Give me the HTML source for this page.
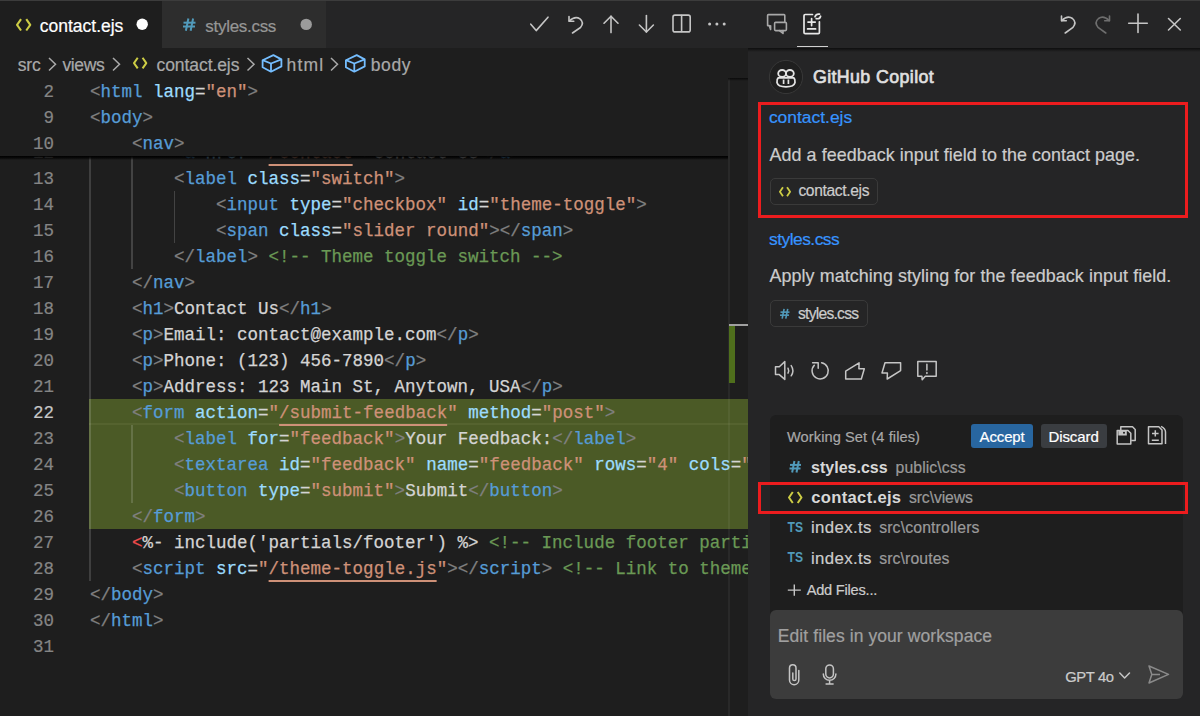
<!DOCTYPE html>
<html><head><meta charset="utf-8">
<style>
*{box-sizing:border-box}
html,body{margin:0;padding:0}
body{width:1200px;height:716px;overflow:hidden;position:relative;background:#1e1e1e;font-family:"Liberation Sans",sans-serif}
.abs{position:absolute}
.tx{-webkit-text-stroke:0.2px currentColor;position:absolute;white-space:pre;line-height:1;font-family:"Liberation Sans",sans-serif}
.ln{-webkit-text-stroke:0.2px currentColor;position:absolute;left:0;width:54px;text-align:right;height:26px;line-height:26px;font-family:"Liberation Mono",monospace;font-size:17.5px;letter-spacing:0.0px;padding-top:1.0px}
.cl{-webkit-text-stroke:0.25px currentColor;position:absolute;left:90px;height:26px;line-height:26px;font-family:"Liberation Mono",monospace;font-size:17.5px;letter-spacing:0.0px;white-space:pre;color:#d4d4d4;padding-top:1.0px}
svg{position:absolute;overflow:visible}
</style></head><body>
<!-- top border -->
<div class="abs" style="left:0;top:0;width:1200px;height:1px;background:#3c3c3c"></div>
<!-- tab bar -->
<div class="abs" style="left:0;top:1px;width:748px;height:47px;background:#252526"></div>
<div class="abs" style="left:0;top:1px;width:162px;height:47px;background:#1e1e1e"></div>
<div class="abs" style="left:162px;top:1px;width:164px;height:47px;background:#2d2d2d"></div>
<!-- panel header + body -->
<div class="abs" style="left:748px;top:1px;width:452px;height:715px;background:#252526"></div>

<!-- editor content area -->
<div class="abs" id="editor" style="left:0;top:78px;width:748px;height:638px;overflow:hidden">
  <div class="abs" style="left:0;top:-78px;width:748px;height:716px">
    <!-- diff highlight -->
    <div class="abs" style="left:89px;top:399px;width:659px;height:130px;background:#4b5a26"></div>
    <div class="abs" style="left:89px;top:423px;width:659px;height:2px;background:#55632f"></div>
    <!-- indent guides -->
    <div class="abs" style="left:89px;top:139px;width:2px;height:442px;background:rgba(255,255,255,0.15)"></div>
    <div class="abs" style="left:131px;top:139px;width:2px;height:130px;background:rgba(255,255,255,0.17)"></div>
    <div class="abs" style="left:174px;top:191px;width:1px;height:52px;background:rgba(255,255,255,0.17)"></div>
    <div class="abs" style="left:131px;top:425px;width:2px;height:78px;background:rgba(255,255,255,0.15)"></div>
    <div class="ln" style="top:139px;color:#858585">12</div><div class="cl" style="top:139px">        <span style="color:#808080">&lt;</span><span style="color:#569cd6">a</span> <span style="color:#9cdcfe">href</span><span style="color:#d4d4d4">=</span><span style="color:#ce9178">"</span><span style="color:#ce9178;text-decoration:underline;text-underline-offset:6px;text-decoration-thickness:1.5px">/contact</span><span style="color:#ce9178">"</span><span style="color:#808080">&gt;</span><span style="color:#d4d4d4">Contact Us</span><span style="color:#808080">&lt;/</span><span style="color:#569cd6">a</span><span style="color:#808080">&gt;</span></div>
<div class="ln" style="top:165px;color:#858585">13</div><div class="cl" style="top:165px">        <span style="color:#808080">&lt;</span><span style="color:#569cd6">label</span> <span style="color:#9cdcfe">class</span><span style="color:#d4d4d4">=</span><span style="color:#ce9178">"switch"</span><span style="color:#808080">&gt;</span></div>
<div class="ln" style="top:191px;color:#858585">14</div><div class="cl" style="top:191px">            <span style="color:#808080">&lt;</span><span style="color:#569cd6">input</span> <span style="color:#9cdcfe">type</span><span style="color:#d4d4d4">=</span><span style="color:#ce9178">"checkbox"</span> <span style="color:#9cdcfe">id</span><span style="color:#d4d4d4">=</span><span style="color:#ce9178">"theme-toggle"</span><span style="color:#808080">&gt;</span></div>
<div class="ln" style="top:217px;color:#858585">15</div><div class="cl" style="top:217px">            <span style="color:#808080">&lt;</span><span style="color:#569cd6">span</span> <span style="color:#9cdcfe">class</span><span style="color:#d4d4d4">=</span><span style="color:#ce9178">"slider round"</span><span style="color:#808080">&gt;</span><span style="color:#808080">&lt;/</span><span style="color:#569cd6">span</span><span style="color:#808080">&gt;</span></div>
<div class="ln" style="top:243px;color:#858585">16</div><div class="cl" style="top:243px">        <span style="color:#808080">&lt;/</span><span style="color:#569cd6">label</span><span style="color:#808080">&gt;</span> <span style="color:#6a9955">&lt;!-- Theme toggle switch --&gt;</span></div>
<div class="ln" style="top:269px;color:#858585">17</div><div class="cl" style="top:269px">    <span style="color:#808080">&lt;/</span><span style="color:#569cd6">nav</span><span style="color:#808080">&gt;</span></div>
<div class="ln" style="top:295px;color:#858585">18</div><div class="cl" style="top:295px">    <span style="color:#808080">&lt;</span><span style="color:#569cd6">h1</span><span style="color:#808080">&gt;</span><span style="color:#d4d4d4">Contact Us</span><span style="color:#808080">&lt;/</span><span style="color:#569cd6">h1</span><span style="color:#808080">&gt;</span></div>
<div class="ln" style="top:321px;color:#858585">19</div><div class="cl" style="top:321px">    <span style="color:#808080">&lt;</span><span style="color:#569cd6">p</span><span style="color:#808080">&gt;</span><span style="color:#d4d4d4">Email: contact@example.com</span><span style="color:#808080">&lt;/</span><span style="color:#569cd6">p</span><span style="color:#808080">&gt;</span></div>
<div class="ln" style="top:347px;color:#858585">20</div><div class="cl" style="top:347px">    <span style="color:#808080">&lt;</span><span style="color:#569cd6">p</span><span style="color:#808080">&gt;</span><span style="color:#d4d4d4">Phone: (123) 456-7890</span><span style="color:#808080">&lt;/</span><span style="color:#569cd6">p</span><span style="color:#808080">&gt;</span></div>
<div class="ln" style="top:373px;color:#858585">21</div><div class="cl" style="top:373px">    <span style="color:#808080">&lt;</span><span style="color:#569cd6">p</span><span style="color:#808080">&gt;</span><span style="color:#d4d4d4">Address: 123 Main St, Anytown, USA</span><span style="color:#808080">&lt;/</span><span style="color:#569cd6">p</span><span style="color:#808080">&gt;</span></div>
<div class="ln" style="top:399px;color:#c6c6c6">22</div><div class="cl" style="top:399px">    <span style="color:#808080">&lt;</span><span style="color:#569cd6">form</span> <span style="color:#9cdcfe">action</span><span style="color:#d4d4d4">=</span><span style="color:#ce9178">"</span><span style="color:#ce9178;text-decoration:underline;text-underline-offset:6px;text-decoration-thickness:1.5px">/submit-feedback</span><span style="color:#ce9178">"</span> <span style="color:#9cdcfe">method</span><span style="color:#d4d4d4">=</span><span style="color:#ce9178">"post"</span><span style="color:#808080">&gt;</span></div>
<div class="ln" style="top:425px;color:#858585">23</div><div class="cl" style="top:425px">        <span style="color:#808080">&lt;</span><span style="color:#569cd6">label</span> <span style="color:#9cdcfe">for</span><span style="color:#d4d4d4">=</span><span style="color:#ce9178">"feedback"</span><span style="color:#808080">&gt;</span><span style="color:#d4d4d4">Your Feedback:</span><span style="color:#808080">&lt;/</span><span style="color:#569cd6">label</span><span style="color:#808080">&gt;</span></div>
<div class="ln" style="top:451px;color:#858585">24</div><div class="cl" style="top:451px">        <span style="color:#808080">&lt;</span><span style="color:#569cd6">textarea</span> <span style="color:#9cdcfe">id</span><span style="color:#d4d4d4">=</span><span style="color:#ce9178">"feedback"</span> <span style="color:#9cdcfe">name</span><span style="color:#d4d4d4">=</span><span style="color:#ce9178">"feedback"</span> <span style="color:#9cdcfe">rows</span><span style="color:#d4d4d4">=</span><span style="color:#ce9178">"4"</span> <span style="color:#9cdcfe">cols</span><span style="color:#d4d4d4">=</span><span style="color:#ce9178">"50"</span><span style="color:#808080">&gt;</span><span style="color:#808080">&lt;/</span><span style="color:#569cd6">textarea</span><span style="color:#808080">&gt;</span></div>
<div class="ln" style="top:477px;color:#858585">25</div><div class="cl" style="top:477px">        <span style="color:#808080">&lt;</span><span style="color:#569cd6">button</span> <span style="color:#9cdcfe">type</span><span style="color:#d4d4d4">=</span><span style="color:#ce9178">"submit"</span><span style="color:#808080">&gt;</span><span style="color:#d4d4d4">Submit</span><span style="color:#808080">&lt;/</span><span style="color:#569cd6">button</span><span style="color:#808080">&gt;</span></div>
<div class="ln" style="top:503px;color:#858585">26</div><div class="cl" style="top:503px">    <span style="color:#808080">&lt;/</span><span style="color:#569cd6">form</span><span style="color:#808080">&gt;</span></div>
<div class="ln" style="top:529px;color:#858585">27</div><div class="cl" style="top:529px">    <span style="color:#f14c4c">&lt;</span><span style="color:#d4d4d4">%- include('partials/footer') %&gt;</span> <span style="color:#6a9955">&lt;!-- Include footer partial --&gt;</span></div>
<div class="ln" style="top:555px;color:#858585">28</div><div class="cl" style="top:555px">    <span style="color:#808080">&lt;</span><span style="color:#569cd6">script</span> <span style="color:#9cdcfe">src</span><span style="color:#d4d4d4">=</span><span style="color:#ce9178">"</span><span style="color:#ce9178;text-decoration:underline;text-underline-offset:6px;text-decoration-thickness:1.5px">/theme-toggle.js</span><span style="color:#ce9178">"</span><span style="color:#808080">&gt;</span><span style="color:#808080">&lt;/</span><span style="color:#569cd6">script</span><span style="color:#808080">&gt;</span> <span style="color:#6a9955">&lt;!-- Link to theme toggle script --&gt;</span></div>
<div class="ln" style="top:581px;color:#858585">29</div><div class="cl" style="top:581px"><span style="color:#808080">&lt;/</span><span style="color:#569cd6">body</span><span style="color:#808080">&gt;</span></div>
<div class="ln" style="top:607px;color:#858585">30</div><div class="cl" style="top:607px"><span style="color:#808080">&lt;/</span><span style="color:#569cd6">html</span><span style="color:#808080">&gt;</span></div>
<div class="ln" style="top:633px;color:#858585">31</div><div class="cl" style="top:633px"></div>
  </div>
</div>
<!-- sticky scroll -->
<div class="abs" style="left:0;top:78px;width:728px;height:78px;background:#1e1e1e;overflow:hidden">
  <div class="abs" style="left:0;top:-78px;width:748px;height:300px">
  <div class="ln" style="top:78px;color:#858585">2</div><div class="cl" style="top:78px"><span style="color:#808080">&lt;</span><span style="color:#569cd6">html</span> <span style="color:#9cdcfe">lang</span><span style="color:#d4d4d4">=</span><span style="color:#ce9178">"en"</span><span style="color:#808080">&gt;</span></div>
<div class="ln" style="top:104px;color:#858585">9</div><div class="cl" style="top:104px"><span style="color:#808080">&lt;</span><span style="color:#569cd6">body</span><span style="color:#808080">&gt;</span></div>
<div class="ln" style="top:130px;color:#858585">10</div><div class="cl" style="top:130px">    <span style="color:#808080">&lt;</span><span style="color:#569cd6">nav</span><span style="color:#808080">&gt;</span></div>
  </div>
</div>
<div class="abs" style="left:0;top:156px;width:728px;height:4px;background:linear-gradient(#000000 0%,#000000b0 50%,#00000000 100%)"></div>
<!-- overview ruler -->
<div class="abs" style="left:728px;top:78px;width:1.5px;height:638px;background:rgba(255,255,255,0.05)"></div>
<div class="abs" style="left:728px;top:78px;width:20px;height:3px;background:linear-gradient(#000000aa,#00000000)"></div>
<div class="abs" style="left:729px;top:325px;width:6px;height:58px;background:#4f6f1c"></div>
<div class="abs" style="left:729px;top:324px;width:19px;height:2px;background:#a0a0a0"></div>

<!-- panel body shadow -->
<div class="abs" style="left:748px;top:48px;width:452px;height:4px;background:linear-gradient(#000000a0,#00000000)"></div>
<div class="abs" style="left:797px;top:45.5px;width:30.5px;height:1.6px;background:#cfcfcf"></div>


<!-- working set box -->
<div class="abs" style="left:770px;top:415px;width:413px;height:210px;background:#1e1e1e;border-radius:6px"></div>
<!-- input box -->
<div class="abs" style="left:770px;top:610px;width:413px;height:89px;background:#3c3c3c;border-radius:6px"></div>
<!-- pills -->
<div class="abs" style="left:769.5px;top:177.5px;width:108.5px;height:27px;border:1px solid #3a3a3a;border-radius:5px"></div>
<div class="abs" style="left:769.5px;top:300.3px;width:98px;height:26.5px;border:1px solid #3a3a3a;border-radius:5px"></div>
<!-- buttons -->
<div class="abs" style="left:970.8px;top:424.4px;width:62px;height:23.3px;background:#2866a0;border-radius:3px"></div>
<div class="abs" style="left:1040.6px;top:424.4px;width:66px;height:23.3px;background:#3a3d41;border-radius:3px"></div>
<!-- red boxes -->
<div class="abs" style="left:758px;top:102px;width:430px;height:116px;border:3px solid #ec1c1e"></div>
<div class="abs" style="left:758px;top:482px;width:430px;height:31.5px;border:3px solid #ec1c1e"></div>
<svg width="1200" height="716" style="position:absolute;left:0;top:0"><path d="M21.05 19.20 L17.05 24.85 L21.05 30.50" stroke="#cdcd45" stroke-width="2.1" fill="none" stroke-linecap="butt" stroke-linejoin="round"/><path d="M26.25 19.20 L30.25 24.85 L26.25 30.50" stroke="#cdcd45" stroke-width="2.1" fill="none" stroke-linecap="butt" stroke-linejoin="round"/><circle cx="142.2" cy="24.2" r="5.7" fill="#ffffff"/><g stroke="#519aba" stroke-width="2.0" fill="none"><path d="M188.38 18.50 L185.88 30.80"/><path d="M193.12 18.50 L190.62 30.80"/><path d="M183.50 22.68 L195.50 22.68"/><path d="M183.00 26.50 L195.00 26.50"/></g><circle cx="306.2" cy="24.4" r="5.7" fill="#9b9b9b"/><g stroke="#c5c5c5" stroke-width="1.6" fill="none" stroke-linecap="round" stroke-linejoin="round"><path d="M530.8 24.2 L536.2 30.6 L548 17.2"/><path d="M569 16.5 L569 21.2 L573.8 21.2"/><path d="M569.3 21 Q575 15.5 580 18.8 Q584.5 22.5 580.5 27.5 L572.5 33"/><path d="M611 16.2 L611 32.6"/><path d="M604 23.2 L611 16.2 L618 23.2"/><path d="M646.4 15.6 L646.4 32"/><path d="M639.4 25 L646.4 32 L653.4 25"/><rect x="673" y="15.1" width="17.2" height="16.8" rx="2"/><path d="M681.6 15.5 L681.6 31.5"/></g><circle cx="709.6" cy="24" r="1.5" fill="#c5c5c5"/><circle cx="716.9" cy="24" r="1.5" fill="#c5c5c5"/><circle cx="724.2" cy="24" r="1.5" fill="#c5c5c5"/><g stroke="#a8a8a8" stroke-width="1.6" fill="none" stroke-linejoin="round" stroke-linecap="round"><path d="M784.8 21.5 L784.8 15.4 Q784.8 14.6 784 14.6 L768.4 14.6 Q767.6 14.6 767.6 15.4 L767.6 25.6 L769.2 25.6 L770.6 29.5 L770.6 25.8"/><rect x="774.6" y="22.4" width="11.8" height="8.2" rx="1"/><path d="M779.5 30.6 L783 33.4 L783 30.6"/></g><g stroke="#e8e8e8" stroke-width="1.7" fill="none" stroke-linejoin="round" stroke-linecap="round"><path d="M812.5 14.5 L805.2 14.5 Q804 14.5 804 15.7 L804 32.4 Q804 33.6 805.2 33.6 L818.2 33.6 Q819.4 33.6 819.4 32.4 L819.4 21.8"/><path d="M811.6 18.6 L811.6 25.6 M808 22.1 L815.2 22.1 M807.6 28.9 L815.6 28.9"/><path d="M815 16.8 Q816.2 13.6 819.5 14.2 M816.2 18.6 Q819.8 19.4 820.6 16.2"/></g><g stroke="#c5c5c5" stroke-width="1.6" fill="none" stroke-linecap="round" stroke-linejoin="round"><path d="M1061.5 16 L1061.5 20.8 L1066.3 20.8"/><path d="M1061.8 20.6 Q1067.5 15 1072.5 18.5 Q1077 22.2 1073 27.3 L1065.2 33"/><path d="M1128.7 23.2 L1147.3 23.2 M1138 14 L1138 32.4"/><path d="M1168.5 18.5 L1180.3 30 M1180.3 18.5 L1168.5 30"/></g><g stroke="#6e6e6e" stroke-width="1.6" fill="none" stroke-linecap="round" stroke-linejoin="round"><path d="M1109.5 16 L1109.5 20.8 L1104.7 20.8"/><path d="M1109.2 20.6 Q1103.5 15 1098.5 18.5 Q1094 22.2 1098 27.3 L1105.8 33"/></g><path d="M49.00 58.00 L55.50 64.25 L49.00 70.50" stroke="#a9a9a9" stroke-width="1.5" fill="none"/><path d="M113.00 58.00 L119.50 64.25 L113.00 70.50" stroke="#a9a9a9" stroke-width="1.5" fill="none"/><path d="M137.72 57.80 L134.00 63.10 L137.72 68.40" stroke="#cdcd45" stroke-width="2.0" fill="none" stroke-linecap="butt" stroke-linejoin="round"/><path d="M142.58 57.80 L146.30 63.10 L142.58 68.40" stroke="#cdcd45" stroke-width="2.0" fill="none" stroke-linecap="butt" stroke-linejoin="round"/><path d="M247.50 58.00 L254.00 64.25 L247.50 70.50" stroke="#a9a9a9" stroke-width="1.5" fill="none"/><g stroke="#75beff" stroke-width="1.8" fill="none" stroke-linejoin="round"><path d="M273.40 55.10 262.60 60.20 262.60 67.20 271.00 71.70 281.40 66.40 281.40 59.40Z"/><path d="M262.60 60.20 271.00 63.50 281.40 59.40"/><path d="M271.00 63.50 271.00 71.70"/></g><path d="M331.00 58.00 L337.50 64.25 L331.00 70.50" stroke="#a9a9a9" stroke-width="1.5" fill="none"/><g stroke="#75beff" stroke-width="1.8" fill="none" stroke-linejoin="round"><path d="M356.70 55.10 345.90 60.20 345.90 67.20 354.30 71.70 364.70 66.40 364.70 59.40Z"/><path d="M345.90 60.20 354.30 63.50 364.70 59.40"/><path d="M354.30 63.50 354.30 71.70"/></g><circle cx="786" cy="77" r="16.6" fill="#1f1f1f" stroke="#383838" stroke-width="1"/><g stroke="#e4e4e4" stroke-width="1.8" fill="none"><ellipse cx="782.1" cy="73.4" rx="3.9" ry="3.4"/><ellipse cx="789.9" cy="73.4" rx="3.9" ry="3.4"/><path d="M778.3 77.8 Q776.6 79.2 777 82.6 Q778 86.8 786 86.8 Q794 86.8 795 82.6 Q795.4 79.2 793.7 77.8 Z"/></g><path d="M783.6 79.6 L783.6 84 M788.4 79.6 L788.4 84" stroke="#e4e4e4" stroke-width="1.7"/><path d="M782.96 187.20 L779.90 191.70 L782.96 196.20" stroke="#cdcd45" stroke-width="1.8" fill="none" stroke-linecap="butt" stroke-linejoin="round"/><path d="M787.04 187.20 L790.10 191.70 L787.04 196.20" stroke="#cdcd45" stroke-width="1.8" fill="none" stroke-linecap="butt" stroke-linejoin="round"/><g stroke="#519aba" stroke-width="1.6" fill="none"><path d="M784.09 308.80 L782.18 318.60"/><path d="M787.70 308.80 L785.79 318.60"/><path d="M780.50 312.13 L789.50 312.13"/><path d="M780.00 315.17 L789.00 315.17"/></g><g stroke="#c5c5c5" stroke-width="1.5" fill="none" stroke-linejoin="round" stroke-linecap="round"><path d="M775.5 366.8 L779.3 366.8 L784.8 361.6 L784.8 379.4 L779.3 374.6 L775.5 374.6 Z"/><path d="M788 368.2 Q789.3 370.7 788 373.2 M791.2 365.6 Q794.6 370.7 791.2 375.8"/><path d="M814.3 365.2 A8.1 8.1 0 1 0 821.6 362.8"/><path d="M812.6 362.8 L818.2 362.8 L818.2 368.2"/><path d="M861.3 379 L845.7 379 L845.7 371.2 L859.1 362.8 L858.9 368.8 L864.3 368.8 Z"/><path d="M885 362.8 L900.6 362.8 L900.6 370.6 L887.2 379 L887.4 373 L882 373 Z"/><path d="M917.8 361.5 L936.2 361.5 L936.2 376.2 L925.3 376.2 L922.2 379.7 L921.9 376.2 L917.8 376.2 Z"/><path d="M926.9 364.2 L926.9 370 M926.9 372.6 L926.9 373.4"/></g><g stroke="#c5c5c5" stroke-width="1.5" fill="none" stroke-linejoin="round"><path d="M1120.8 430 L1120.8 426.8 L1132.5 426.8 L1135.2 429.5 L1135.2 440.5 L1131.2 440.5"/><path d="M1117.2 430.5 L1128 430.5 L1130.8 433.3 L1130.8 444 L1117.2 444 Z"/></g><rect x="1118.3" y="431" width="8.5" height="4.5" fill="#c5c5c5"/><circle cx="1124" cy="432.8" r="1" fill="#1e1e1e"/><g stroke="#c5c5c5" stroke-width="1.5" fill="none" stroke-linejoin="round"><path d="M1148.5 426.8 L1158.8 426.8 L1162 430 L1162 443.8 L1148.5 443.8 Z"/><path d="M1161 426.3 Q1165.5 428.5 1165.5 432 L1165.5 444"/><path d="M1155.3 430.3 L1155.3 436.5 M1152 433.4 L1158.6 433.4 M1151.8 440.3 L1158.8 440.3"/></g><g stroke="#519aba" stroke-width="2.0" fill="none"><path d="M794.44 461.00 L792.14 472.50"/><path d="M798.81 461.00 L796.51 472.50"/><path d="M790.00 464.91 L801.00 464.91"/><path d="M789.50 468.48 L800.50 468.48"/></g><path d="M792.78 492.00 L789.00 497.50 L792.78 503.00" stroke="#cdcd45" stroke-width="2.0" fill="none" stroke-linecap="butt" stroke-linejoin="round"/><path d="M797.72 492.00 L801.50 497.50 L797.72 503.00" stroke="#cdcd45" stroke-width="2.0" fill="none" stroke-linecap="butt" stroke-linejoin="round"/><text x="787.5" y="531.7" font-family="Liberation Sans" font-weight="700" font-size="15.2" fill="#519aba" textLength="15.5" lengthAdjust="spacingAndGlyphs">TS</text><text x="787.5" y="561.9" font-family="Liberation Sans" font-weight="700" font-size="15.2" fill="#519aba" textLength="15.5" lengthAdjust="spacingAndGlyphs">TS</text><path d="M794.3 584.4 L794.3 595.8 M787.8 590.1 L800.8 590.1" stroke="#c5c5c5" stroke-width="1.4"/><g stroke="#c5c5c5" stroke-width="1.5" fill="none" stroke-linecap="round" stroke-linejoin="round"><path d="M798.8 670.5 L798.8 680 A4.65 4.65 0 0 1 789.5 680 L789.5 668 A3.25 3.25 0 0 1 796 668 L796 679 A1.6 1.6 0 0 1 792.8 679 L792.8 673"/><rect x="825.8" y="664.9" width="7.6" height="13" rx="3.8"/><path d="M823.3 674 A6.3 6.3 0 0 0 835.9 674 M829.6 680.4 L829.6 684 M826.1 684 L833.1 684"/><path d="M1119.8 673 L1124.6 678 L1129.5 673"/></g><g stroke="#8a8a8a" stroke-width="1.5" fill="none" stroke-linejoin="round"><path d="M1149 666 L1168.5 674.4 L1149 683 L1151.8 674.4 Z M1151.8 674.4 L1160 674.4"/></g></svg>
<div class="tx" id="t_tab1" style="left:39.80px;top:18.00px;font-size:17.5px;font-weight:400;color:#ffffff;letter-spacing:-0.013px">contact.ejs</div>
<div class="tx" id="t_tab2" style="left:205.29px;top:18.00px;font-size:17.0px;font-weight:400;color:#969696;letter-spacing:-0.288px">styles.css</div>
<div class="tx" id="t_bc1" style="left:17.78px;top:57.00px;font-size:17.5px;font-weight:400;color:#a9a9a9;letter-spacing:-0.200px">src</div>
<div class="tx" id="t_bc2" style="left:62.40px;top:57.00px;font-size:17.5px;font-weight:400;color:#a9a9a9;letter-spacing:-0.356px">views</div>
<div class="tx" id="t_bc3" style="left:156.50px;top:57.00px;font-size:17.5px;font-weight:400;color:#a9a9a9;letter-spacing:-0.072px">contact.ejs</div>
<div class="tx" id="t_bc4" style="left:286.57px;top:57.00px;font-size:17.5px;font-weight:400;color:#a9a9a9;letter-spacing:1.200px">html</div>
<div class="tx" id="t_bc5" style="left:370.75px;top:57.00px;font-size:17.5px;font-weight:400;color:#a9a9a9;letter-spacing:0.625px">body</div>
<div class="tx" id="t_gh" style="left:812.91px;top:69.00px;font-size:17.8px;font-weight:401;color:#e0e0e0;letter-spacing:0.399px;-webkit-text-stroke:0.65px currentColor">GitHub Copilot</div>
<div class="tx" id="t_l1" style="left:768.90px;top:109.00px;font-size:17.4px;font-weight:400;color:#3794ff;letter-spacing:0.015px">contact.ejs</div>
<div class="tx" id="t_p1" style="left:769.60px;top:147.00px;font-size:17.9px;font-weight:400;color:#cccccc;letter-spacing:0.052px">Add a feedback input field to the contact page.</div>
<div class="tx" id="t_c1" style="left:798.38px;top:183.00px;font-size:15.6px;font-weight:400;color:#cccccc;letter-spacing:-0.348px">contact.ejs</div>
<div class="tx" id="t_l2" style="left:768.98px;top:231.00px;font-size:17.4px;font-weight:400;color:#3794ff;letter-spacing:-0.511px">styles.css</div>
<div class="tx" id="t_p2" style="left:769.50px;top:268.00px;font-size:17.9px;font-weight:400;color:#cccccc;letter-spacing:0.079px">Apply matching styling for the feedback input field.</div>
<div class="tx" id="t_c2" style="left:798.03px;top:306.00px;font-size:15.6px;font-weight:400;color:#cccccc;letter-spacing:-0.735px">styles.css</div>
<div class="tx" id="t_ws" style="left:787.00px;top:430.00px;font-size:14.6px;font-weight:400;color:#a8a8a8;letter-spacing:0.091px">Working Set (4 files)</div>
<div class="tx" id="t_acc" style="left:979.60px;top:429.00px;font-size:15.0px;font-weight:400;color:#ffffff;letter-spacing:-0.150px">Accept</div>
<div class="tx" id="t_dis" style="left:1048.40px;top:429.00px;font-size:15.0px;font-weight:400;color:#ffffff;letter-spacing:-0.075px">Discard</div>
<div class="tx" id="t_f1" style="left:811.06px;top:460.00px;font-size:16.0px;font-weight:700;color:#d8d8d8;letter-spacing:0.011px;-webkit-text-stroke:0">styles.css</div>
<div class="tx" id="t_d1" style="left:895.55px;top:460.00px;font-size:15.8px;font-weight:400;color:#9a9a9a;letter-spacing:0.084px">public\css</div>
<div class="tx" id="t_f2" style="left:811.34px;top:490.00px;font-size:16.6px;font-weight:700;color:#d8d8d8;letter-spacing:0.308px;-webkit-text-stroke:0">contact.ejs</div>
<div class="tx" id="t_d2" style="left:908.93px;top:490.00px;font-size:15.8px;font-weight:400;color:#9a9a9a;letter-spacing:-0.111px">src\views</div>
<div class="tx" id="t_f3" style="left:810.99px;top:520.00px;font-size:16.8px;font-weight:400;color:#cccccc;letter-spacing:0.360px">index.ts</div>
<div class="tx" id="t_d3" style="left:879.13px;top:520.00px;font-size:15.8px;font-weight:400;color:#9a9a9a;letter-spacing:0.148px">src\controllers</div>
<div class="tx" id="t_f4" style="left:810.99px;top:551.00px;font-size:16.8px;font-weight:400;color:#cccccc;letter-spacing:0.360px">index.ts</div>
<div class="tx" id="t_d4" style="left:879.13px;top:551.00px;font-size:15.8px;font-weight:400;color:#9a9a9a;letter-spacing:0.110px">src\routes</div>
<div class="tx" id="t_add" style="left:806.70px;top:583.00px;font-size:14.6px;font-weight:400;color:#cccccc;letter-spacing:-0.217px">Add Files...</div>
<div class="tx" id="t_ph" style="left:777.80px;top:628.00px;font-size:17.5px;font-weight:400;color:#a0a0a0;letter-spacing:0.081px">Edit files in your workspace</div>
<div class="tx" id="t_gpt" style="left:1065.26px;top:670.00px;font-size:14.8px;font-weight:400;color:#cccccc;letter-spacing:-0.386px">GPT 4o</div>
</body></html>
